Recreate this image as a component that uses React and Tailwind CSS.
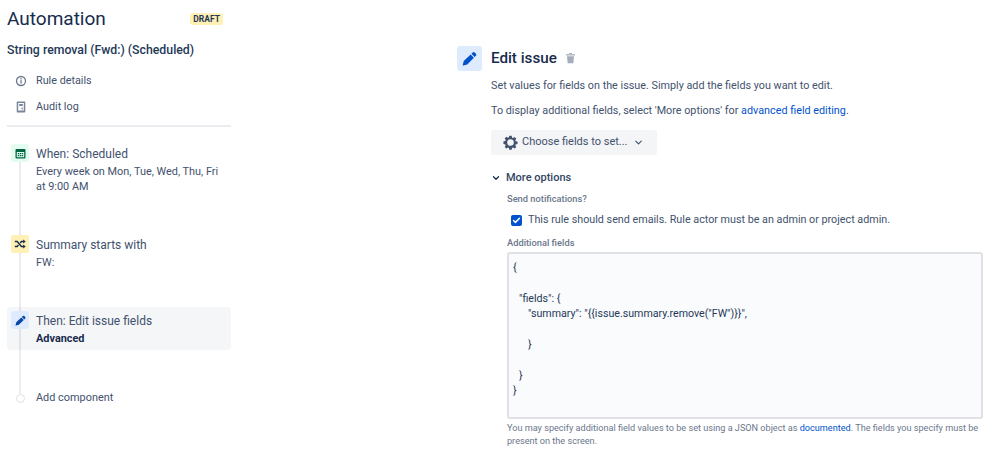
import { ChevronDown, Check } from 'lucide-react';

const FONT = "font-['Roboto','Open_Sans',sans-serif]";

const PENCIL = 'M12.800 1.800a1.800 1.800 0 0 1 2.500 0l1.400 1.400a1.800 1.800 0 0 1 0 2.500l-1.500 1.500-3.900-3.900zM10.400 4.200l3.900 3.900-8 8-4.800 1.200a.5.5 0 0 1-.6-.6l1.200-4.800z';

const CODE = [
  { pl: 'pl-0', text: '{' },
  { pl: 'pl-0', text: '' },
  { pl: 'pl-[6px]', text: '"fields": {' },
  { pl: 'pl-[15px]', text: '"summary": "{{issue.summary.remove("FW")}}",' },
  { pl: 'pl-0', text: '' },
  { pl: 'pl-[15px]', text: '}' },
  { pl: 'pl-0', text: '' },
  { pl: 'pl-[6px]', text: '}' },
  { pl: 'pl-0', text: '}' },
];

function PencilIcon({ size, className }) {
  return (
    <svg width={size} height={size} viewBox="0 0 18 18" className={className}>
      <path fill="currentColor" d={PENCIL} />
    </svg>
  );
}

function Step({ tint, icon, title, sub, active, bold }) {
  return (
    <div className={`relative flex rounded-[3px] pl-[4px] pt-[4px] ${active ? 'bg-[#091e420a] h-[43px]' : ''}`}>
      <div className={`flex h-[18px] w-[18px] shrink-0 items-center justify-center rounded-[3px] ${tint}`}>{icon}</div>
      <div className="ml-[7px] pt-[1px]">
        <div className="text-[12px] leading-[18px] text-[#42526e]">{title}</div>
        <div className={`mt-[2px] text-[10.900px] leading-[14.500px] ${bold ? 'font-bold text-[#172b4d]' : 'text-[#42526e]'}`}>{sub}</div>
      </div>
    </div>
  );
}

export default function App() {
  return (
    <div className={`${FONT} flex h-[460px] w-[998px] overflow-hidden bg-white text-[#172b4d]`}>
      {/* left rail */}
      <aside className="ml-[7px] w-[224px] shrink-0">
        <div className="mt-[6px] flex items-center justify-between">
          <h1 className="text-[19px] leading-[25px] font-normal">Automation</h1>
          <span className="mr-[8px] rounded-[3px] bg-[#fff0b3] px-[3px] text-[8.500px] leading-[12px] font-bold text-[#253858]">DRAFT</span>
        </div>
        <div className="mt-[10px] text-[12.300px] leading-[18px] font-medium text-[#253858]">String removal (Fwd:) (Scheduled)</div>
        <div className="mt-[9px] flex h-[26px] items-center pl-[8px] text-[10.800px] text-[#42526e]">
          <svg width="12" height="12" viewBox="0 0 12 12" className="text-[#6b778c]">
            <circle cx="6" cy="6" r="4.500" fill="none" stroke="currentColor" strokeWidth="1.300" />
            <rect x="5.400" y="5.200" width="1.300" height="3.300" fill="currentColor" />
            <rect x="5.400" y="3.200" width="1.300" height="1.300" fill="currentColor" />
          </svg>
          <span className="ml-[9px]">Rule details</span>
        </div>
        <div className="flex h-[26px] items-center pl-[8px] text-[10.800px] text-[#42526e]">
          <svg width="12" height="12" viewBox="0 0 12 12" className="text-[#7a869a]">
            <path fill="currentColor" fillRule="evenodd" d="M2.500 .5h7a.8.8 0 0 1 .8.8v9.400a.8.8 0 0 1-.8.8h-7a.8.8 0 0 1-.8-.8V1.300a.8.8 0 0 1 .8-.8zM3.200 2v7.500h5.600V2zM4.200 3h3.600v2H4.200zM6.500 6.500h1.300v2H6.500z" />
          </svg>
          <span className="ml-[9px]">Audit log</span>
        </div>
        <div className="mt-[5px] h-[2px] bg-[#ebecf0]" />
        <div className="relative mt-[13px]">
          <div className="absolute left-[12px] top-[16px] h-[238px] w-[2px] bg-[#ebecf0]" />
          <div className="h-[91px]">
            <Step tint="bg-[#e3fcef]" title="When: Scheduled" sub={<>Every week on Mon, Tue, Wed, Thu, Fri<br />at 9:00 AM</>} icon={
              <svg width="11" height="11" viewBox="0 0 11 11">
                <path fill="#006644" fillRule="evenodd" d="M1.500 1h8A1 1 0 0 1 10.500 2v7.500a1 1 0 0 1-1 1h-8a1 1 0 0 1-1-1V2a1 1 0 0 1 1-1zM1.800 4v5.200h7.400V4z" />
                <path fill="#006644" d="M2.800 4.900h1.400v1.300H2.800zM4.800 4.900h1.400v1.300H4.800zM6.800 4.900h1.400v1.300H6.800zM2.800 7h1.400v1.300H2.800zM4.800 7h1.400v1.300H4.800zM6.800 7h1.400v1.300H6.800z" />
              </svg>
            } />
          </div>
          <div className="h-[64px]">
            <Step tint="bg-[#fff0b3]" title="Summary starts with" sub="FW:" icon={
              <svg width="12" height="12" viewBox="0 0 12 12" fill="none" stroke="#172b4d" strokeWidth="1.400">
                <path d="M.8 3.500h2.400l4.200 5h2.400M.8 8.500h2.400l1.200-1.500M6.200 5l1.200-1.500h2.400" />
                <path fill="#172b4d" stroke="none" d="M9.200 1.500l2.500 2-2.500 2zM9.200 6.500l2.500 2-2.500 2z" />
              </svg>
            } />
          </div>
          <div className="mt-[12px]">
            <Step active bold tint="bg-[#deebff]" title="Then: Edit issue fields" sub="Advanced" icon={<PencilIcon size={11} className="text-[#0747a6]" />} />
          </div>
          <div className="relative mt-[39px] flex h-[18px] items-center pl-[9px] text-[10.900px] text-[#42526e]">
            <span className="h-[9px] w-[9px] rounded-full border border-[#dfe1e6] bg-white" />
            <span className="ml-[11px]">Add component</span>
          </div>
        </div>
      </aside>

      {/* right panel */}
      <main className="ml-[226px] w-[530px] shrink-0 pt-[45px]">
        <div className="flex items-center">
          <div className="flex h-[25px] w-[25px] items-center justify-center rounded-[3px] bg-[#deebff]">
            <PencilIcon size={15} className="text-[#0052cc]" />
          </div>
          <h2 className="ml-[9px] pt-[1px] text-[15.200px] leading-[25px] font-medium">Edit issue</h2>
          <svg width="11" height="12" viewBox="0 0 11 12" className="ml-[8px] text-[#a5adba]">
            <path fill="currentColor" d="M1 2.200h9v1.300H1zM4 1h3v1H4zM2 4.200h7l-.6 6.600a.6.6 0 0 1-.6.5H3.200a.6.6 0 0 1-.6-.5z" />
          </svg>
        </div>
        <div className="ml-[34px]">
          <p className="mt-[7px] text-[10.800px] leading-[16px] text-[#42526e]">Set values for fields on the issue. Simply add the fields you want to edit.</p>
          <p className="mt-[9px] text-[10.800px] leading-[16px] text-[#42526e]">To display additional fields, select 'More options' for <span className="text-[#0052cc]">advanced field editing</span>.</p>
          <div className="mt-[11px] flex h-[25px] w-[166px] items-center rounded-[3px] bg-[#f4f5f7] pl-[12px] text-[11px] text-[#42526e]">
            <svg width="15" height="15" viewBox="0 0 16 16" className="text-[#42526e]">
              <path fill="currentColor" fillRule="evenodd" d="M6.700 .8h2.600l.4 2 1 .4 1.700-1.100 1.800 1.800-1.100 1.700.4 1 2 .4v2.600l-2 .4-.4 1 1.100 1.700-1.800 1.800-1.700-1.100-1 .4-.4 2H6.700l-.4-2-1-.4-1.700 1.100-1.800-1.800 1.100-1.700-.4-1-2-.4V6.700l2-.4.4-1-1.100-1.700 1.800-1.800 1.700 1.100 1-.4zM8 4.500a3.500 3.500 0 1 0 0 7 3.500 3.500 0 0 0 0-7z" />
            </svg>
            <span className="ml-[4px]">Choose fields to set...</span>
            <ChevronDown size={11} className="ml-[5px]" strokeWidth={2.500} />
          </div>
          <div className="mt-[15px] flex items-center text-[11px] leading-[16px] font-medium text-[#344563]">
            <ChevronDown size={10} strokeWidth={3} className="text-[#172b4d]" />
            <span className="ml-[5px]">More options</span>
          </div>
          <div className="ml-[16px]">
            <div className="mt-[7px] text-[9.300px] leading-[12px] font-medium text-[#6b778c]">Send notifications?</div>
            <div className="mt-[7px] flex items-center pl-[4px] text-[10.750px] leading-[16px] text-[#42526e]">
              <span className="flex h-[11px] w-[11px] items-center justify-center rounded-[2px] bg-[#0052cc]">
                <Check size={9} strokeWidth={4} className="text-white" />
              </span>
              <span className="ml-[6px]">This rule should send emails. Rule actor must be an admin or project admin.</span>
            </div>
            <div className="mt-[9px] text-[9.300px] leading-[12px] font-medium text-[#6b778c]">Additional fields</div>
            <div className="mt-[3px] h-[167px] w-[476px] rounded-[3px] border-2 border-[#dfe1e6] bg-[#fafbfc] px-[4px] pt-[6px] text-[10.650px] leading-[15.400px] text-[#253858]">
              {CODE.map((line, i) => (
                <div key={i} className={`h-[15.400px] whitespace-pre ${line.pl}`}>{line.text}</div>
              ))}
            </div>
            <p className="mt-[3px] w-[476px] text-[9.150px] leading-[12.700px] text-[#6b778c]">You may specify additional field values to be set using a JSON object as <span className="text-[#0052cc]">documented</span>. The fields you specify must be present on the screen.</p>
          </div>
        </div>
      </main>
    </div>
  );
}
